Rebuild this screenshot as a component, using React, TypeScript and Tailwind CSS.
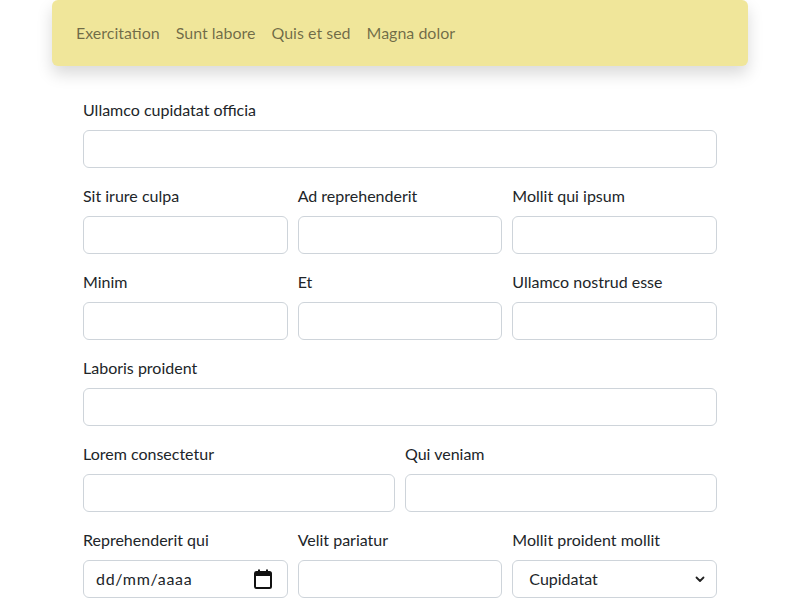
import React from 'react';

const font = { fontFamily: 'Lato, "Noto Sans", sans-serif' };

const Field = ({ label, children }: { label: string; children?: React.ReactNode }) => (
  <div className="flex flex-col min-w-0">
    <label className="text-[16px] leading-6 text-[#212529] mb-2">{label}</label>
    {children ?? (
      <input
        type="text"
        className="h-[38px] w-full rounded-md border border-[#ced4da] bg-white px-3 text-[16px] text-[#212529] outline-none"
      />
    )}
  </div>
);

const CalendarIcon = () => (
  <svg width="18" height="20" viewBox="0 0 18 20" fill="none">
    <rect x="1" y="3" width="16" height="16" rx="1.5" stroke="#111" strokeWidth="2" />
    <rect x="1" y="3" width="16" height="4" fill="#111" />
    <rect x="4" y="0.5" width="2" height="4" fill="#111" />
    <rect x="12" y="0.5" width="2" height="4" fill="#111" />
  </svg>
);

export default function App() {
  const links = ['Exercitation', 'Sunt labore', 'Quis et sed', 'Magna dolor'];

  return (
    <div className="min-h-[600px] bg-white" style={font}>
      <div className="px-[52px]">
        {/* Navbar */}
        <nav className="h-[66px] flex items-center rounded-md bg-[#f0e69a] px-4 shadow-[0_8px_16px_rgba(0,0,0,0.15)]">
          {links.map((l) => (
            <a key={l} href="#" className="px-2 text-[16px] leading-6 text-[rgba(0,0,0,0.55)]">
              {l}
            </a>
          ))}
        </nav>
      </div>

      {/* Form */}
      <form className="mx-[83px] mt-8 flex flex-col gap-4">
        <Field label="Ullamco cupidatat officia" />

        <div className="grid grid-cols-3 gap-[10px]">
          <Field label="Sit irure culpa" />
          <Field label="Ad reprehenderit" />
          <Field label="Mollit qui ipsum" />
        </div>

        <div className="grid grid-cols-3 gap-[10px]">
          <Field label="Minim" />
          <Field label="Et" />
          <Field label="Ullamco nostrud esse" />
        </div>

        <Field label="Laboris proident" />

        <div className="grid grid-cols-2 gap-[10px]">
          <Field label="Lorem consectetur" />
          <Field label="Qui veniam" />
        </div>

        <div className="grid grid-cols-3 gap-[10px]">
          <Field label="Reprehenderit qui">
            <div className="h-[38px] flex items-center justify-between rounded-md border border-[#ced4da] bg-white pl-3 pr-[15px] text-[16px] text-[#212529]">
              <span className="tracking-[0.7px]">dd/mm/aaaa</span>
              <CalendarIcon />
            </div>
          </Field>
          <Field label="Velit pariatur" />
          <Field label="Mollit proident mollit">
            <div className="h-[38px] flex items-center justify-between rounded-md border border-[#ced4da] bg-white pl-4 pr-[10px] text-[16px] text-[#212529]">
              <span>Cupidatat</span>
              <svg width="12" height="12" viewBox="0 0 12 12" fill="none">
                <path d="M2.5 4.5 6 8l3.5-3.5" stroke="#222" strokeWidth="1.8" strokeLinecap="round" strokeLinejoin="round" />
              </svg>
            </div>
          </Field>
        </div>
      </form>
    </div>
  );
}
